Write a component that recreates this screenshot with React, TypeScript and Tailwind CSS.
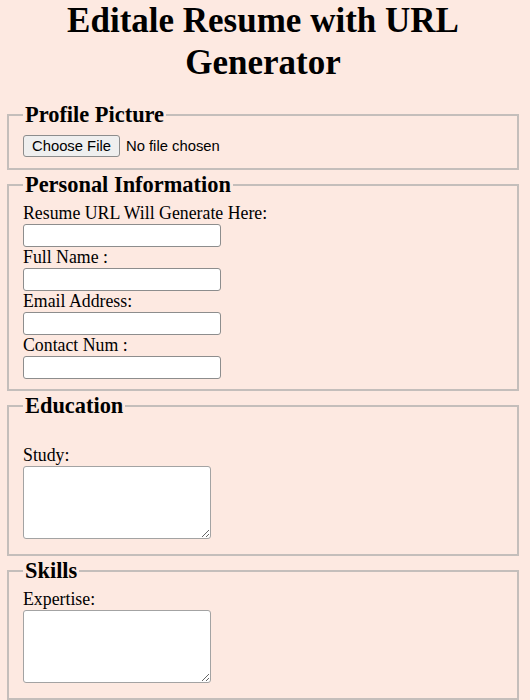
import React from "react";

const serif = { fontFamily: '"Liberation Serif", "Times New Roman", serif' };
const sans = { fontFamily: '"Liberation Sans", Arial, sans-serif' };

function Section({
  title,
  children,
}: {
  title: string;
  children: React.ReactNode;
}) {
  return (
    <fieldset className="border-2 border-solid border-[#c4bebb] pl-[14px] pr-3 pt-[6px] pb-[10px]">
      <legend className="px-[2px] text-[22.4px] font-bold leading-[25px] text-black">
        {title}
      </legend>
      {children}
    </fieldset>
  );
}

function Field({ label }: { label: string }) {
  return (
    <div>
      <label className="block text-[17.8px] leading-[21px] text-black">
        {label}
      </label>
      <input
        type="text"
        className="block h-[23px] w-[198px] rounded-[3px] border border-[#8d8d8d] bg-white px-1 text-[14px]"
      />
    </div>
  );
}

function Area({ label }: { label: string }) {
  return (
    <div>
      <label className="block text-[17.8px] leading-[21px] text-black">
        {label}
      </label>
      <textarea className="mb-[5px] block h-[73px] w-[188px] resize rounded-[3px] border border-[#a3a3a3] bg-white p-1 text-[14px]" />
    </div>
  );
}

export default function App() {
  return (
    <div
      className="min-h-[700px] overflow-hidden bg-[#fde9e1] pl-[7px] pr-[11px]"
      style={serif}
    >
      <h1 className="mb-[18px] text-center text-[35px] font-bold leading-[42px] text-black">
        Editale Resume with URL
        <br />
        Generator
      </h1>

      <form className="flex flex-col gap-[2px]">
        <Section title="Profile Picture">
          <div className="mt-[1px] flex h-[24px] items-center gap-[6px]">
            <button
              type="button"
              className="h-[22px] rounded-[3px] border border-[#8d8d8d] bg-[#efefef] px-[8px] text-[14.8px] leading-[20px] text-black"
              style={sans}
            >
              Choose File
            </button>
            <span className="text-[14.8px] text-black" style={sans}>
              No file chosen
            </span>
          </div>
        </Section>

        <Section title="Personal Information">
          <Field label="Resume URL Will Generate Here:" />
          <Field label="Full Name :" />
          <Field label="Email Address:" />
          <Field label="Contact Num :" />
        </Section>

        <Section title="Education">
          <div className="h-[21px]" />
          <Area label="Study:" />
        </Section>

        <Section title="Skills">
          <Area label="Expertise:" />
        </Section>
      </form>
    </div>
  );
}
